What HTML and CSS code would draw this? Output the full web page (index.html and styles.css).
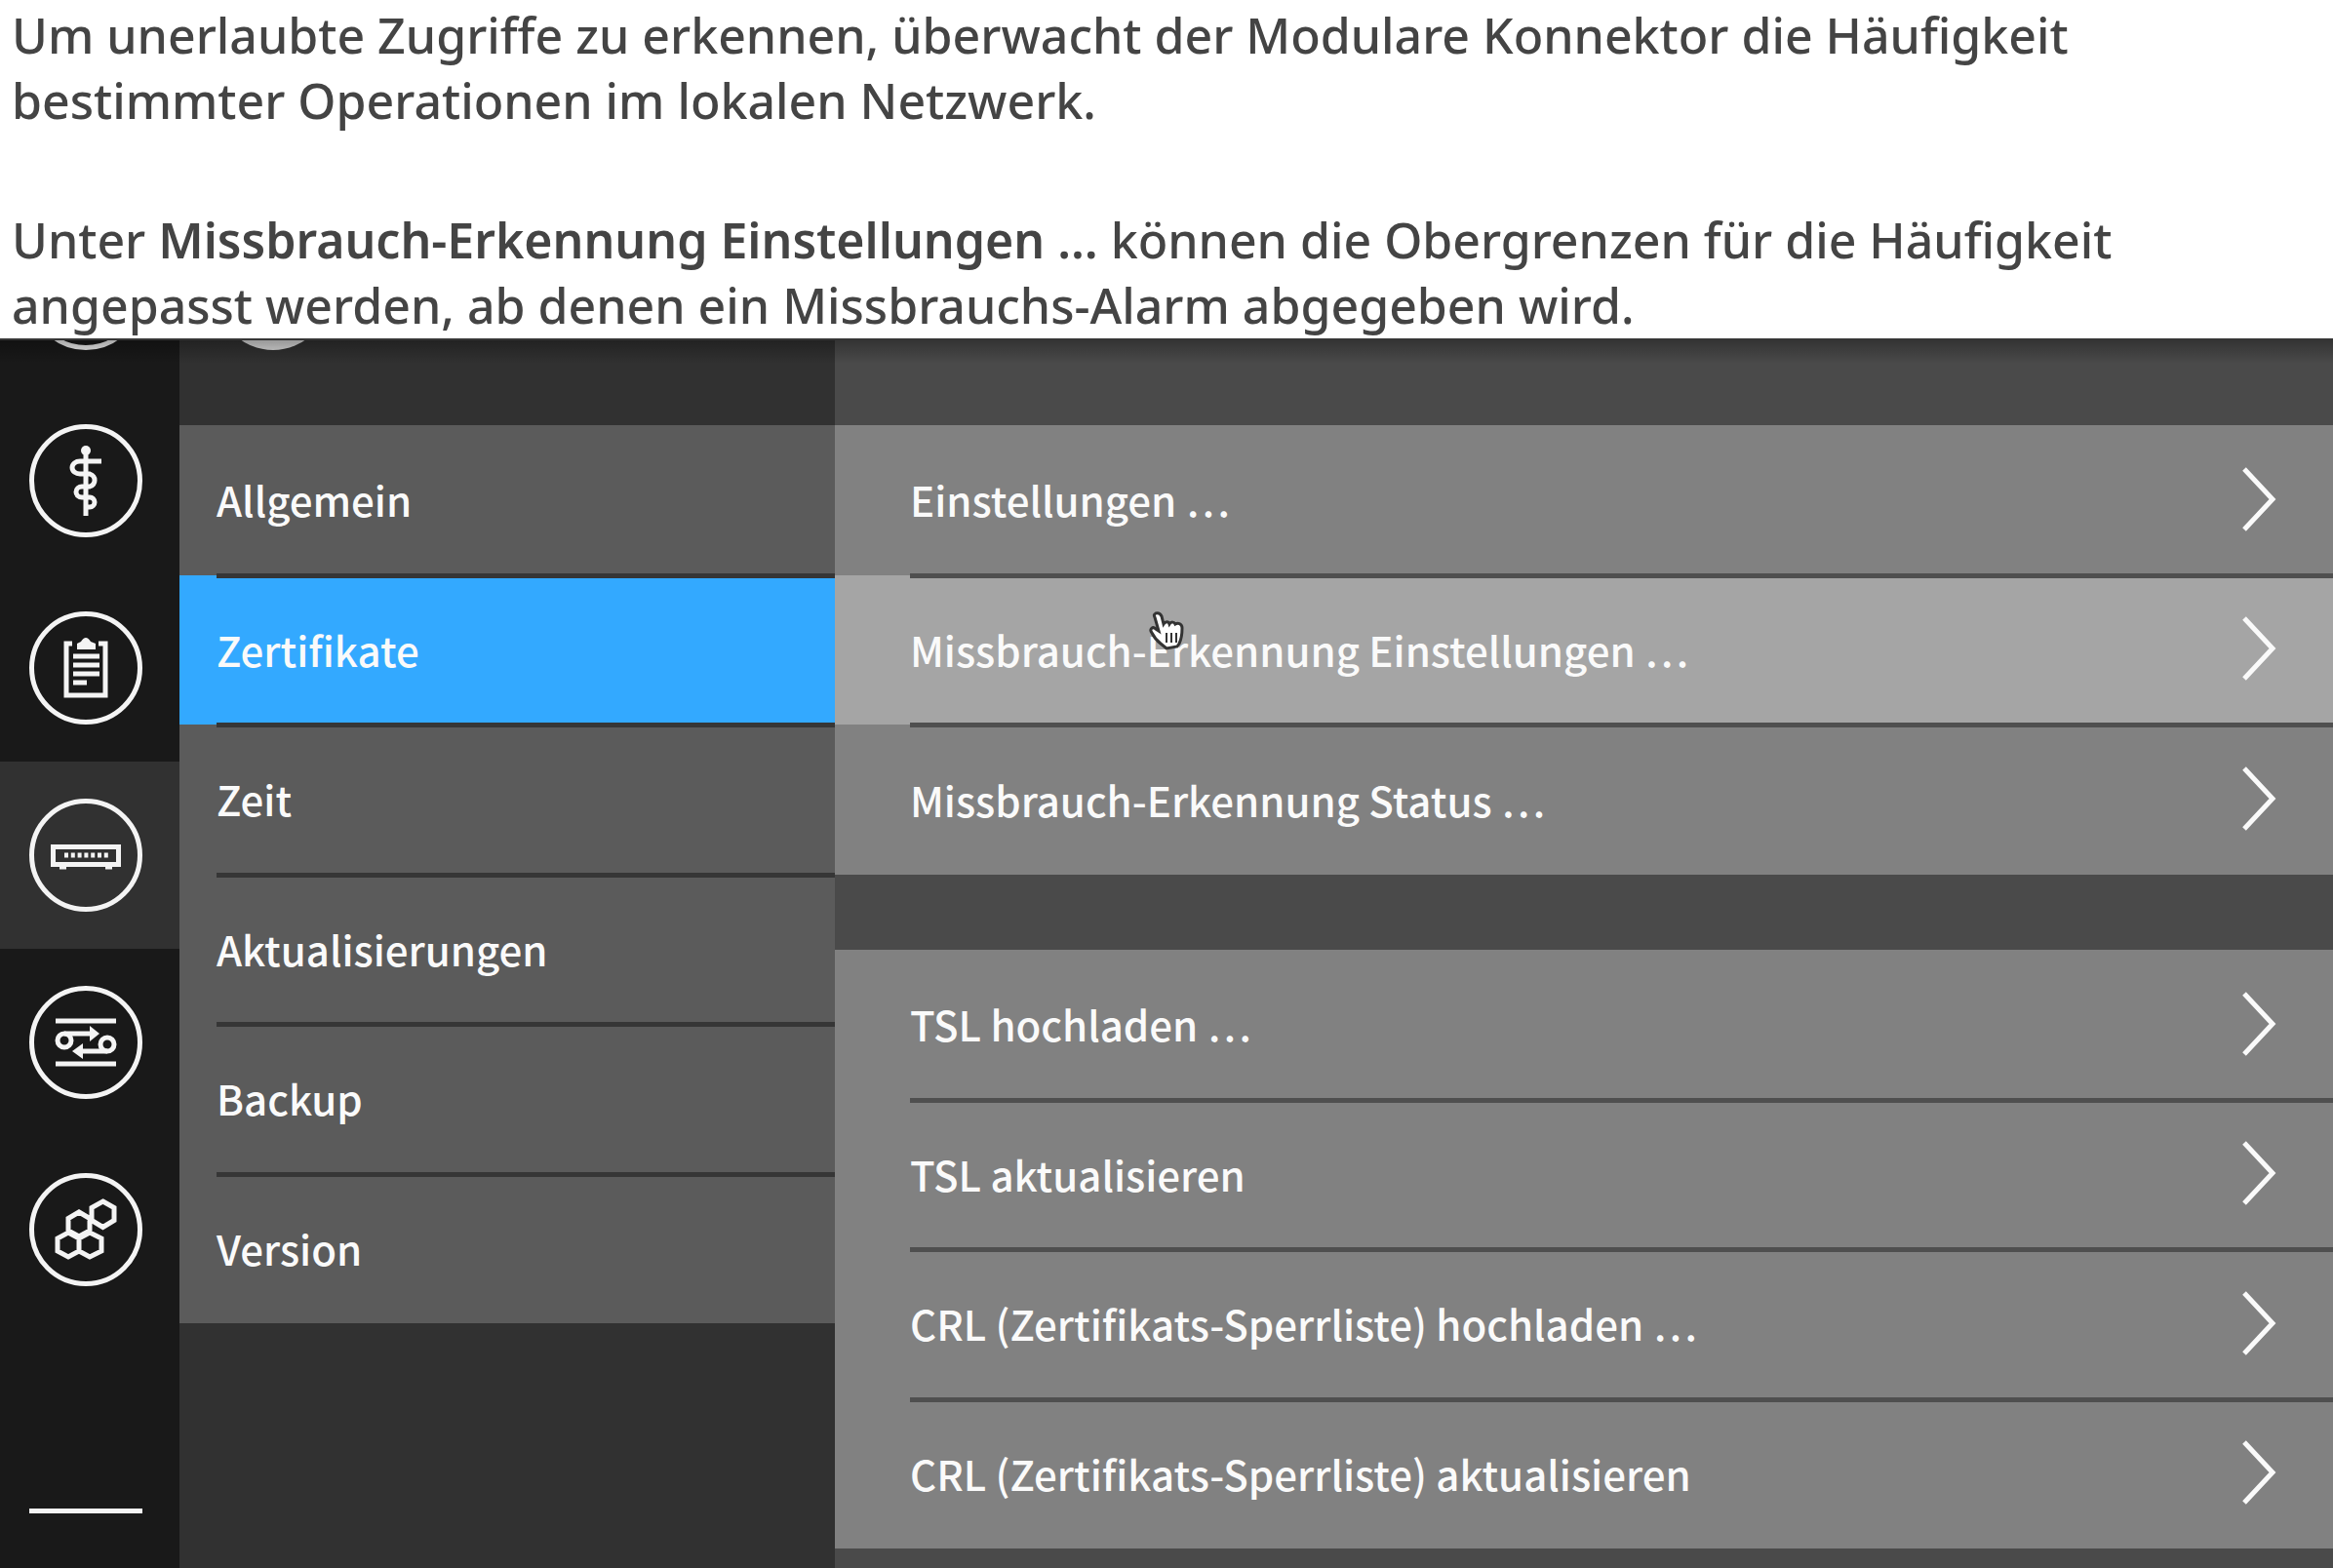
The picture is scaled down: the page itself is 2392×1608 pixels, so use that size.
FILE: index.html
```html
<!DOCTYPE html>
<html lang="de">
<head>
<meta charset="utf-8">
<title>Modularer Konnektor – Missbrauch-Erkennung</title>
<meta name="viewport" content="width=device-width, initial-scale=1">
<link rel="stylesheet" href="styles.css">
</head>
<body>
<header class="intro">
  <p>Um unerlaubte Zugriffe zu erkennen, überwacht der Modulare Konnektor die Häufigkeit<br>bestimmter Operationen im lokalen Netzwerk.</p>
  <p>Unter <strong>Missbrauch-Erkennung Einstellungen …</strong> können die Obergrenzen für die Häufigkeit<br>angepasst werden, ab denen ein Missbrauchs-Alarm abgegeben wird.</p>
</header>
<main class="app">
  <nav class="rail" aria-label="Hauptmenü">
    <button class="tile tile-cut" aria-label="Start"><svg class="icon" viewBox="0 0 116 116"><circle class="ring" cx="58" cy="58" r="55.5"/></svg></button>
    <button class="tile" aria-label="Praxis"><svg class="icon" viewBox="0 0 116 116"><circle class="ring" cx="58" cy="58" r="55.5"/><circle class="solid" cx="58" cy="27" r="5"/><path class="line" d="M58 27V94M74 38H52A8 6.5 0 0 0 52 51H62A8 7 0 0 1 62 64H54A6 5.500 0 0 0 54 75H62A5 5 0 0 1 62 85H56"/></svg></button>
    <button class="tile" aria-label="Protokoll"><svg class="icon" viewBox="0 0 116 116"><circle class="ring" cx="58" cy="58" r="55.5"/><path class="line" d="M44 33H38V86H78V33H71M45 46H72M45 55H72M45 64H72M45 73H59"/><path class="solid" d="M49 39V33L53 31Q58 23 63 31L68 33V39Z"/></svg></button>
    <button class="tile tile-active" aria-label="System" aria-current="page"><svg class="icon" viewBox="0 0 116 116"><circle class="ring" cx="58" cy="58" r="55.5"/><path class="line" d="M24.500 49.500H91.500V67.500H24.500Z"/><path class="line" stroke-dasharray="4 2.800" d="M36 58H81"/><path class="line" d="M31 70H38M78 70H85"/></svg></button>
    <button class="tile" aria-label="Netzwerk"><svg class="icon" viewBox="0 0 116 116"><circle class="ring" cx="58" cy="58" r="55.5"/><path class="line" d="M27 36H89M27 80H89M36 49H65M80 67H52"/><circle class="line" cx="36" cy="56" r="7"/><circle class="line" cx="80" cy="60" r="7"/><path class="solid" d="M62 41L72 49L62 57ZM55 59L44 67L55 75Z"/></svg></button>
    <button class="tile" aria-label="Module"><svg class="icon" viewBox="0 0 116 116"><circle class="ring" cx="58" cy="58" r="55.5"/><path class="thin" d="M75.500 29L87 35.500V48.500L75.500 55.500L64 48.500V35.500ZM51 40L62 46.500V59L51 65L40 59V46.500ZM40 61L51 67V80L40 86L29 80V67ZM62 61L74 67V80L62 86L51 80V67Z"/></svg></button>
    <hr class="rail-rule">
  </nav>
  <nav class="side" aria-label="System">
    <div class="side-head"><span class="badge"></span></div>
    <ul class="list side-list">
      <li><button class="row">Allgemein</button></li>
      <li><button class="row selected" aria-current="page">Zertifikate</button></li>
      <li><button class="row">Zeit</button></li>
      <li><button class="row">Aktualisierungen</button></li>
      <li><button class="row">Backup</button></li>
      <li><button class="row">Version</button></li>
    </ul>
  </nav>
  <section class="detail" aria-label="Zertifikate">
    <ul class="list group group-small">
      <li><button class="row">Einstellungen …<svg class="chev" viewBox="0 0 36 68"><path d="M3 3L32 34L3 65"/></svg></button></li>
      <li><button class="row hovered">Missbrauch-Erkennung Einstellungen …<svg class="chev" viewBox="0 0 36 68"><path d="M3 3L32 34L3 65"/></svg></button>
        <svg class="pointer" viewBox="0 0 36 40"><path d="M7 2C10 1 12 3 13 5L15 13C17 10 20 10 21 13C23 10 26 11 27 13C30 11 34 13 34 17C34 25 33 29 31 33L29 36L18 38L12 33C8 30 5 26 3 22C0 18 4 15 7 18L10 20L6 6C5 4 5 3 7 2Z"/><path class="creases" d="M18 22V32M23 22V32M28 22V32"/></svg></li>
      <li><button class="row">Missbrauch-Erkennung Status …<svg class="chev" viewBox="0 0 36 68"><path d="M3 3L32 34L3 65"/></svg></button></li>
    </ul>
    <ul class="list group group-large">
      <li><button class="row">TSL hochladen …<svg class="chev" viewBox="0 0 36 68"><path d="M3 3L32 34L3 65"/></svg></button></li>
      <li><button class="row">TSL aktualisieren<svg class="chev" viewBox="0 0 36 68"><path d="M3 3L32 34L3 65"/></svg></button></li>
      <li><button class="row">CRL (Zertifikats-Sperrliste) hochladen …<svg class="chev" viewBox="0 0 36 68"><path d="M3 3L32 34L3 65"/></svg></button></li>
      <li><button class="row">CRL (Zertifikats-Sperrliste) aktualisieren<svg class="chev" viewBox="0 0 36 68"><path d="M3 3L32 34L3 65"/></svg></button></li>
    </ul>
  </section>
</main>
</body>
</html>
```
FILE: styles.css
```css
* { box-sizing: border-box; }

body {
  margin: 0;
  min-height: 100vh;
  display: flex;
  flex-direction: column;
  background: #fff;
  color: #444;
  font-family: "Noto Sans", "Open Sans", sans-serif;
}

button {
  border: 0;
  padding: 0;
  background: none;
  color: inherit;
  font: inherit;
  text-align: left;
}

.intro {
  display: flex;
  flex-direction: column;
  gap: 76px;
  padding: 3px 12px 0;
  font-size: 50px;
  font-weight: 500;
  line-height: 67px;
}

.intro p { margin: 0; }
.intro strong { font-weight: 600; }

.app {
  position: relative;
  flex: 1;
  display: grid;
  grid-template-columns: 184px 672px 1fr;
  color: #fafafa;
  font-family: "Noto Sans CJK JP", "Noto Sans", sans-serif;
  font-size: 42px;
  font-weight: 500;
}

/* shadow cast by the bar above the scrolled content */
.app::before {
  content: "";
  position: absolute;
  inset: 0 0 auto;
  height: 24px;
  background: linear-gradient(rgba(0, 0, 0, .3), rgba(0, 0, 0, 0));
  border-top: 2px solid #363636;
  z-index: 2;
}

.rail {
  display: flex;
  flex-direction: column;
  background: #191919;
}

.tile {
  height: 192px;
  padding-left: 30px;
  display: flex;
  align-items: center;
}

.tile-cut {
  height: 50px;
  align-items: flex-end;
  padding-bottom: 38px;
  overflow: hidden;
}

.tile-active { background: #313131; }

.icon { width: 116px; height: 116px; flex: none; display: block; }
.icon .ring { fill: none; stroke: #f4f4f4; stroke-width: 5; }
.icon .line { fill: none; stroke: #f4f4f4; stroke-width: 5; }
.icon .thin { fill: none; stroke: #f4f4f4; stroke-width: 5; }
.icon .solid { fill: #f4f4f4; }

.rail-rule {
  width: 116px;
  height: 5px;
  margin: auto 0 56px 30px;
  border: 0;
  background: #f4f4f4;
}

.side { background: #313131; }

.side-head {
  height: 89px;
  padding: 0 0 77px 38px;
  display: flex;
  align-items: flex-end;
  overflow: hidden;
}

.badge {
  width: 116px;
  height: 116px;
  flex: none;
  border-radius: 50%;
  background: #dcdcdc;
}

.list {
  margin: 0;
  padding: 0;
  list-style: none;
  display: grid;
  grid-auto-rows: 1fr;
}

.list li { position: relative; display: grid; }

.list li + li::before {
  content: "";
  position: absolute;
  top: -2px;
  right: 0;
  left: var(--inset);
  height: 5px;
  background: var(--rule);
}

.row {
  display: flex;
  align-items: center;
  justify-content: space-between;
  padding: 0 58px 2px var(--inset);
  white-space: nowrap;
}

.side-list {
  --inset: 38px;
  --rule: #363636;
  min-height: 921px;
  background: #5b5b5b;
}

.detail { background: #4a4a4a; padding-top: 89px; }

.group {
  --inset: 77px;
  --rule: #4f4f4f;
  background: #818181;
}

.group-small { min-height: 461px; margin-bottom: 77px; }
.group-large { min-height: 614px; }

.selected { background: #33a9ff; }
.hovered { background: #a5a5a5; }

.chev { width: 36px; height: 68px; flex: none; }
.chev path { fill: none; stroke: #fafafa; stroke-width: 5; }

.pointer {
  position: absolute;
  top: 37px;
  left: 322px;
  width: 36px;
  height: 40px;
}

.pointer path { fill: #fff; stroke: #333; stroke-width: 3; }
.pointer .creases { stroke-width: 2; }
```
